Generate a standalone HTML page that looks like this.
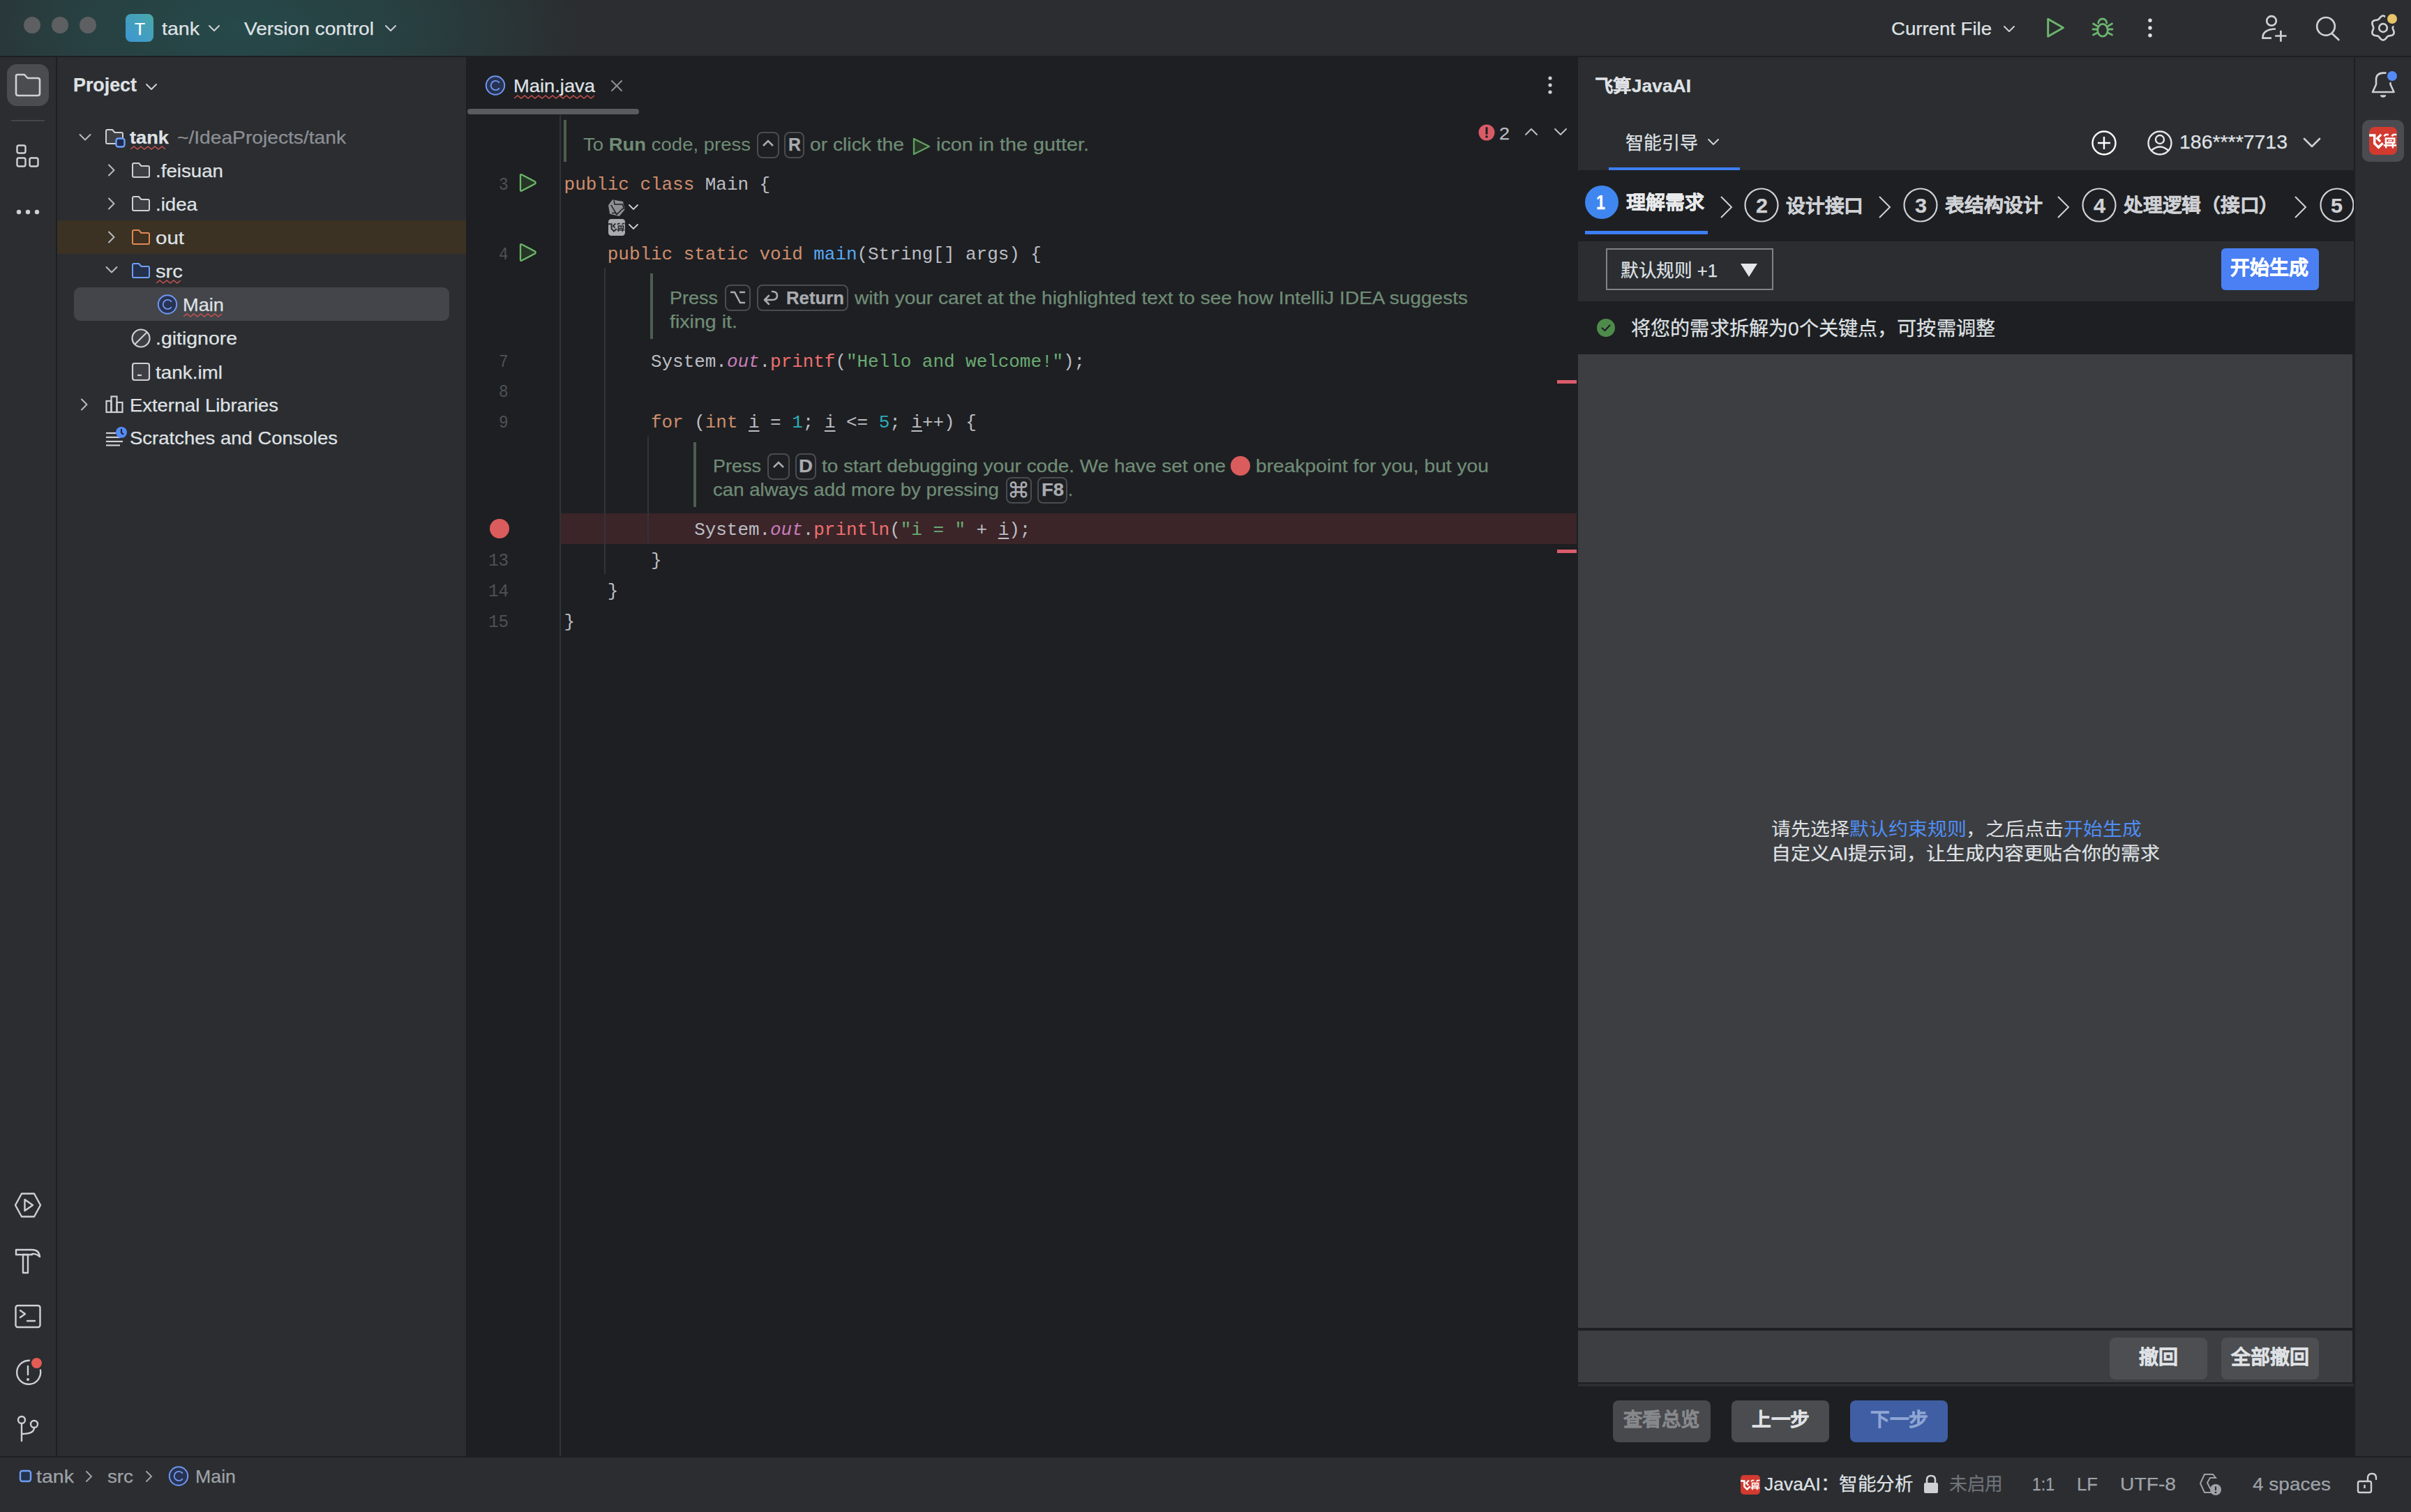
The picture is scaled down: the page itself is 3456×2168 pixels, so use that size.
<!DOCTYPE html><html lang="zh-CN"><head><meta charset="utf-8"><title>IntelliJ IDEA</title><style>
html,body{margin:0;padding:0;width:3456px;height:2168px;overflow:hidden;background:#2b2d30;}
body{position:relative;font-family:'Liberation Sans',sans-serif;}
</style></head><body>
<div style="position:absolute;left:0px;top:0px;width:3456px;height:80px;background:radial-gradient(ellipse 500px 220px at 340px 40px, #26494a 0%, #283f40 50%, #2b2d30 100%);border-radius:0px;"></div>
<div style="position:absolute;left:0px;top:80px;width:3456px;height:2px;background:#1e1f22;border-radius:0px;"></div>
<div style="position:absolute;left:0px;top:82px;width:80px;height:2006px;background:#2b2d30;border-radius:0px;"></div>
<div style="position:absolute;left:80px;top:82px;width:2px;height:2006px;background:#1e1f22;border-radius:0px;"></div>
<div style="position:absolute;left:82px;top:82px;width:586px;height:2006px;background:#2b2d30;border-radius:0px;"></div>
<div style="position:absolute;left:668px;top:82px;width:1594px;height:2006px;background:#1e1f22;border-radius:0px;"></div>
<div style="position:absolute;left:2262px;top:82px;width:1112px;height:2006px;background:#1e1f22;border-radius:0px;"></div>
<div style="position:absolute;left:3374px;top:82px;width:2px;height:2006px;background:#1e1f22;border-radius:0px;"></div>
<div style="position:absolute;left:3376px;top:82px;width:80px;height:2006px;background:#2b2d30;border-radius:0px;"></div>
<div style="position:absolute;left:0px;top:2088px;width:3456px;height:2px;background:#1e1f22;border-radius:0px;"></div>
<div style="position:absolute;left:0px;top:2090px;width:3456px;height:78px;background:#2b2d30;border-radius:0px;"></div>
<div style="position:absolute;left:34px;top:24px;width:24px;height:24px;border-radius:50%;background:#5d5f61"></div>
<div style="position:absolute;left:74px;top:24px;width:24px;height:24px;border-radius:50%;background:#5d5f61"></div>
<div style="position:absolute;left:114px;top:24px;width:24px;height:24px;border-radius:50%;background:#5d5f61"></div>
<div style="position:absolute;left:180px;top:20px;width:40px;height:40px;background:linear-gradient(45deg, #3d96d4 0%, #4aa8a8 100%);border-radius:8px;"></div>
<div id="t1" style="position:absolute;left:192.50px;top:29.60px;font-family:'Liberation Sans', sans-serif;font-size:24px;line-height:1;white-space:pre;color:#ffffff;font-weight:400;transform-origin:0 0;-webkit-text-stroke:0.25px #ffffff;transform:scaleX(1.0224);">T</div>
<div id="t2" style="position:absolute;left:232px;top:27.90px;font-family:'Liberation Sans', sans-serif;font-size:26px;line-height:1;white-space:pre;color:#dfe1e5;font-weight:400;transform-origin:0 0;-webkit-text-stroke:0.25px #dfe1e5;transform:scaleX(1.0985);">tank</div>
<svg style="position:absolute;left:298px;top:35px" width="18" height="12" viewBox="0 0 18 12" fill="none"><path d="M2 2 L9 9 L16 2" stroke="#ced0d6" stroke-width="2" stroke-linecap="round" stroke-linejoin="round"/></svg>
<div id="t3" style="position:absolute;left:350px;top:27.90px;font-family:'Liberation Sans', sans-serif;font-size:26px;line-height:1;white-space:pre;color:#dfe1e5;font-weight:400;transform-origin:0 0;-webkit-text-stroke:0.25px #dfe1e5;transform:scaleX(1.0815);">Version control</div>
<svg style="position:absolute;left:551px;top:35px" width="18" height="12" viewBox="0 0 18 12" fill="none"><path d="M2 2 L9 9 L16 2" stroke="#ced0d6" stroke-width="2" stroke-linecap="round" stroke-linejoin="round"/></svg>
<div id="t4" style="position:absolute;left:2711px;top:27.90px;font-family:'Liberation Sans', sans-serif;font-size:26px;line-height:1;white-space:pre;color:#dfe1e5;font-weight:400;transform-origin:0 0;-webkit-text-stroke:0.25px #dfe1e5;transform:scaleX(1.0602);">Current File</div>
<svg style="position:absolute;left:2871px;top:36px" width="18" height="12" viewBox="0 0 18 12" fill="none"><path d="M2 2 L9 9 L16 2" stroke="#ced0d6" stroke-width="2" stroke-linecap="round" stroke-linejoin="round"/></svg>
<svg style="position:absolute;left:2928px;top:20px" width="36" height="40" viewBox="0 0 36 40" fill="none"><path d="M7.7 7.3 L29.5 19.8 L7.7 32.3 Z" stroke="#6db470" stroke-width="3" stroke-linejoin="round" fill="none"/></svg>
<svg style="position:absolute;left:2996px;top:20px" width="36" height="38" viewBox="0 0 36 38" fill="none"><g stroke="#6db470" stroke-width="2.8" stroke-linecap="round" fill="none">
<path d="M11.8 13 A6 6 0 0 1 23.8 13"/>
<ellipse cx="18" cy="23.3" rx="7.3" ry="8.9"/>
<path d="M4.5 14 L10.5 17.5 M4 22 H10 M4.5 30 L10.5 27 M31.5 14 L25.5 17.5 M32 22 H26 M31.5 30 L25.5 27"/>
</g></svg>
<svg style="position:absolute;left:3072px;top:20px" width="20" height="40" viewBox="0 0 20 40" fill="none"><circle cx="10" cy="9.2" r="2.7" fill="#dfe1e5"/><circle cx="10" cy="20" r="2.7" fill="#dfe1e5"/><circle cx="10" cy="30.8" r="2.7" fill="#dfe1e5"/></svg>
<svg style="position:absolute;left:3232px;top:14px" width="50" height="50" viewBox="0 0 50 50" fill="none"><g stroke="#ced0d6" stroke-width="2.7" stroke-linecap="butt" fill="none"><circle cx="24" cy="15.9" r="6.8"/><path d="M24 40.7 H11.5 Q11 28 30 27.5"/><path d="M37.4 29.8 V45.7 M29.2 37.5 H45.6"/></g></svg>
<svg style="position:absolute;left:3312px;top:14px" width="48" height="50" viewBox="0 0 48 50" fill="none"><g stroke="#ced0d6" stroke-width="2.7" stroke-linecap="round" fill="none"><circle cx="22" cy="23.8" r="12.8"/><path d="M31 34.3 L40.3 43"/></g></svg>
<svg style="position:absolute;left:3392px;top:16px" width="48" height="48" viewBox="0 0 48 48" fill="none"><g stroke="#ced0d6" stroke-width="2.7" fill="none" stroke-linejoin="round"><path d="M37.80,24.00 L37.87,24.73 L38.07,25.48 L38.36,26.27 L38.72,27.13 L39.07,28.04 L39.37,28.99 L39.55,29.97 L39.58,30.94 L39.43,31.86 L39.07,32.70 L38.52,33.43 L37.80,34.03 L36.95,34.48 L36.01,34.81 L35.03,35.03 L34.07,35.18 L33.15,35.30 L32.31,35.44 L31.56,35.65 L30.90,35.95 L30.31,36.37 L29.75,36.92 L29.21,37.58 L28.65,38.31 L28.04,39.07 L27.36,39.80 L26.61,40.45 L25.78,40.96 L24.91,41.29 L24.00,41.40 L23.09,41.29 L22.22,40.96 L21.39,40.45 L20.64,39.80 L19.96,39.07 L19.35,38.31 L18.79,37.58 L18.25,36.92 L17.69,36.37 L17.10,35.95 L16.44,35.65 L15.69,35.44 L14.85,35.30 L13.93,35.18 L12.97,35.03 L11.99,34.81 L11.05,34.48 L10.20,34.03 L9.48,33.43 L8.93,32.70 L8.57,31.86 L8.42,30.94 L8.45,29.97 L8.63,28.99 L8.93,28.04 L9.28,27.13 L9.64,26.27 L9.93,25.48 L10.13,24.73 L10.20,24.00 L10.13,23.27 L9.93,22.52 L9.64,21.73 L9.28,20.87 L8.93,19.96 L8.63,19.01 L8.45,18.03 L8.42,17.06 L8.57,16.14 L8.93,15.30 L9.48,14.57 L10.20,13.97 L11.05,13.52 L11.99,13.19 L12.97,12.97 L13.93,12.82 L14.85,12.70 L15.69,12.56 L16.44,12.35 L17.10,12.05 L17.69,11.63 L18.25,11.08 L18.79,10.42 L19.35,9.69 L19.96,8.93 L20.64,8.20 L21.39,7.55 L22.22,7.04 L23.09,6.71 L24.00,6.60 L24.91,6.71 L25.78,7.04 L26.61,7.55 L27.36,8.20 L28.04,8.93 L28.65,9.69 L29.21,10.42 L29.75,11.08 L30.31,11.63 L30.90,12.05 L31.56,12.35 L32.31,12.56 L33.15,12.70 L34.07,12.82 L35.03,12.97 L36.01,13.19 L36.95,13.52 L37.80,13.97 L38.52,14.57 L39.07,15.30 L39.43,16.14 L39.58,17.06 L39.55,18.03 L39.37,19.01 L39.07,19.96 L38.72,20.87 L38.36,21.73 L38.07,22.52 L37.87,23.27 L37.80,24.00 Z"/><circle cx="24" cy="24" r="5.8"/></g></svg>
<div style="position:absolute;left:3421.9px;top:20.2px;width:14px;height:14px;border-radius:50%;background:#e8c36a;box-shadow:0 0 0 3.5px #2b2d30"></div>
<div style="position:absolute;left:10px;top:92px;width:60px;height:60px;background:#4a4c50;border-radius:14px;"></div>
<svg style="position:absolute;left:20px;top:104px" width="40" height="36" viewBox="0 0 40 36" fill="none"><path d="M3 5 Q3 3 5 3 H15 L19.5 8 H34 Q37 8 37 11 V30 Q37 33 34 33 H6 Q3 33 3 30 Z" stroke="#ced0d6" stroke-width="2.6" stroke-linejoin="round"/></svg>
<div style="position:absolute;left:16px;top:172px;width:48px;height:2px;background:#43454a;border-radius:0px;"></div>
<svg style="position:absolute;left:22px;top:206px" width="36" height="36" viewBox="0 0 36 36" fill="none"><g stroke="#ced0d6" stroke-width="2.4" fill="none"><rect x="2.5" y="2.5" width="12" height="11" rx="2.5"/><rect x="2.5" y="20.5" width="12" height="12" rx="2.5"/><rect x="20.5" y="20.5" width="12" height="12" rx="2.5"/></g></svg>
<svg style="position:absolute;left:20px;top:296px" width="40" height="16" viewBox="0 0 40 16" fill="none"><circle cx="7" cy="8" r="3.2" fill="#ced0d6"/><circle cx="20" cy="8" r="3.2" fill="#ced0d6"/><circle cx="33" cy="8" r="3.2" fill="#ced0d6"/></svg>
<svg style="position:absolute;left:20px;top:1708px" width="40" height="40" viewBox="0 0 40 40" fill="none"><g stroke="#ced0d6" stroke-width="2.4" fill="none" stroke-linejoin="round"><path d="M11 3.5 H29 L38 20 L29 36.5 H11 L2 20 Z"/><path d="M15.5 12 L27 20 L15.5 28 Z"/></g></svg>
<svg style="position:absolute;left:20px;top:1788px" width="40" height="40" viewBox="0 0 40 40" fill="none"><g stroke="#ced0d6" stroke-width="2.4" fill="none" stroke-linejoin="round"><path d="M3 4 H26 Q36 4 37 14 Q32 9 26 10 V11 H3 Z"/><path d="M13 11 H20 V37 H13 Z"/></g></svg>
<svg style="position:absolute;left:20px;top:1868px" width="40" height="40" viewBox="0 0 40 40" fill="none"><g stroke="#ced0d6" stroke-width="2.4" fill="none" stroke-linejoin="round" stroke-linecap="round"><rect x="2.5" y="4" width="35" height="31" rx="3"/><path d="M9 11 L16 16 L9 21"/><path d="M19 26 H30"/></g></svg>
<svg style="position:absolute;left:20px;top:1948px" width="42" height="42" viewBox="0 0 42 42" fill="none"><g stroke="#ced0d6" stroke-width="2.4" fill="none" stroke-linecap="round"><path d="M26 3.5 A17 17 0 1 0 37.5 15"/><path d="M20 11 V23"/></g><circle cx="20" cy="30" r="2" fill="#ced0d6"/></svg>
<div style="position:absolute;left:45px;top:1947px;width:15px;height:15px;border-radius:50%;background:#e55b55;box-shadow:0 0 0 3px #2b2d30"></div>
<svg style="position:absolute;left:20px;top:2028px" width="40" height="42" viewBox="0 0 40 42" fill="none"><g stroke="#ced0d6" stroke-width="2.4" fill="none" stroke-linecap="round"><circle cx="11" cy="8" r="5"/><circle cx="29" cy="14" r="5"/><path d="M11 13 V38"/><path d="M29 19 Q29 28 12 28"/></g></svg>
<div id="t5" style="position:absolute;left:105px;top:109.05px;font-family:'Liberation Sans', sans-serif;font-size:27px;line-height:1;white-space:pre;color:#dfe1e5;font-weight:700;transform-origin:0 0;-webkit-text-stroke:0.25px #dfe1e5;transform:scaleX(0.9940);">Project</div>
<svg style="position:absolute;left:208px;top:119px" width="18" height="12" viewBox="0 0 18 12" fill="none"><path d="M2 2 L9 9 L16 2" stroke="#ced0d6" stroke-width="2" stroke-linecap="round" stroke-linejoin="round"/></svg>
<div style="position:absolute;left:82px;top:316px;width:586px;height:48px;background:#3b3224;border-radius:0px;"></div>
<div style="position:absolute;left:106px;top:412px;width:538px;height:48px;background:#43454a;border-radius:9px;"></div>
<svg style="position:absolute;left:112px;top:190px" width="20" height="14" viewBox="0 0 20 14" fill="none"><path d="M2.5 3 L10 10.5 L17.5 3" stroke="#b8bbc1" stroke-width="2" stroke-linecap="round" stroke-linejoin="round"/></svg>
<svg style="position:absolute;left:150px;top:184px" width="28" height="24" viewBox="0 0 28 24" fill="none"><path d="M2 4 Q2 2 4 2 H11 L14.5 6 H24 Q26 6 26 8 V20 Q26 22 24 22 H4 Q2 22 2 20 Z" fill="#3d3f44" stroke="#ced0d6" stroke-width="2" stroke-linejoin="round" transform="scale(1.0,1.0)"/></svg>
<svg style="position:absolute;left:164px;top:196px" width="18" height="18" viewBox="0 0 18 18" fill="none"><rect x="2.5" y="2.5" width="12" height="12" rx="3" fill="#1d2a4d" stroke="#6f9ef8" stroke-width="2.4"/></svg>
<div id="t6" style="position:absolute;left:186px;top:183.90px;font-family:'Liberation Sans', sans-serif;font-size:26px;line-height:1;white-space:pre;color:#dfe1e5;font-weight:700;transform-origin:0 0;-webkit-text-stroke:0.25px #dfe1e5;transform:scaleX(1.0473);">tank</div>
<div id="t7" style="position:absolute;left:254px;top:183.90px;font-family:'Liberation Sans', sans-serif;font-size:26px;line-height:1;white-space:pre;color:#8c8f95;font-weight:400;transform-origin:0 0;-webkit-text-stroke:0.25px #8c8f95;transform:scaleX(1.0837);">~/IdeaProjects/tank</div>
<svg style="position:absolute;left:187px;top:209px" width="56" height="6" viewBox="0 0 56 6" fill="none"><polyline points="0.0,4 5.0,0 10.0,4 15.0,0 20.0,4 25.0,0 30.0,4 35.0,0 40.0,4 45.0,0 50.0,4" stroke="#c4524f" stroke-width="1.6" fill="none" transform="translate(0,1)"/></svg>
<svg style="position:absolute;left:153px;top:234px" width="14" height="20" viewBox="0 0 14 20" fill="none"><path d="M3 2.5 L10.5 10 L3 17.5" stroke="#b8bbc1" stroke-width="2" stroke-linecap="round" stroke-linejoin="round"/></svg>
<svg style="position:absolute;left:188px;top:232px" width="28" height="24" viewBox="0 0 28 24" fill="none"><path d="M2 4 Q2 2 4 2 H11 L14.5 6 H24 Q26 6 26 8 V20 Q26 22 24 22 H4 Q2 22 2 20 Z" fill="#3d3f44" stroke="#ced0d6" stroke-width="2" stroke-linejoin="round" transform="scale(1.0,1.0)"/></svg>
<div id="t8" style="position:absolute;left:223px;top:231.90px;font-family:'Liberation Sans', sans-serif;font-size:26px;line-height:1;white-space:pre;color:#dfe1e5;font-weight:400;transform-origin:0 0;-webkit-text-stroke:0.25px #dfe1e5;transform:scaleX(1.0650);">.feisuan</div>
<svg style="position:absolute;left:153px;top:282px" width="14" height="20" viewBox="0 0 14 20" fill="none"><path d="M3 2.5 L10.5 10 L3 17.5" stroke="#b8bbc1" stroke-width="2" stroke-linecap="round" stroke-linejoin="round"/></svg>
<svg style="position:absolute;left:188px;top:280px" width="28" height="24" viewBox="0 0 28 24" fill="none"><path d="M2 4 Q2 2 4 2 H11 L14.5 6 H24 Q26 6 26 8 V20 Q26 22 24 22 H4 Q2 22 2 20 Z" fill="#3d3f44" stroke="#ced0d6" stroke-width="2" stroke-linejoin="round" transform="scale(1.0,1.0)"/></svg>
<div id="t9" style="position:absolute;left:223px;top:279.90px;font-family:'Liberation Sans', sans-serif;font-size:26px;line-height:1;white-space:pre;color:#dfe1e5;font-weight:400;transform-origin:0 0;-webkit-text-stroke:0.25px #dfe1e5;transform:scaleX(1.0640);">.idea</div>
<svg style="position:absolute;left:153px;top:330px" width="14" height="20" viewBox="0 0 14 20" fill="none"><path d="M3 2.5 L10.5 10 L3 17.5" stroke="#b8bbc1" stroke-width="2" stroke-linecap="round" stroke-linejoin="round"/></svg>
<svg style="position:absolute;left:188px;top:328px" width="28" height="24" viewBox="0 0 28 24" fill="none"><path d="M2 4 Q2 2 4 2 H11 L14.5 6 H24 Q26 6 26 8 V20 Q26 22 24 22 H4 Q2 22 2 20 Z" fill="#3f3020" stroke="#e08855" stroke-width="2" stroke-linejoin="round" transform="scale(1.0,1.0)"/></svg>
<div id="t10" style="position:absolute;left:223px;top:327.90px;font-family:'Liberation Sans', sans-serif;font-size:26px;line-height:1;white-space:pre;color:#dfe1e5;font-weight:400;transform-origin:0 0;-webkit-text-stroke:0.25px #dfe1e5;transform:scaleX(1.1340);">out</div>
<svg style="position:absolute;left:150px;top:380px" width="20" height="14" viewBox="0 0 20 14" fill="none"><path d="M2.5 3 L10 10.5 L17.5 3" stroke="#b8bbc1" stroke-width="2" stroke-linecap="round" stroke-linejoin="round"/></svg>
<svg style="position:absolute;left:188px;top:376px" width="28" height="24" viewBox="0 0 28 24" fill="none"><path d="M2 4 Q2 2 4 2 H11 L14.5 6 H24 Q26 6 26 8 V20 Q26 22 24 22 H4 Q2 22 2 20 Z" fill="#25324d" stroke="#6f9ef8" stroke-width="2" stroke-linejoin="round" transform="scale(1.0,1.0)"/></svg>
<div id="t11" style="position:absolute;left:223px;top:375.90px;font-family:'Liberation Sans', sans-serif;font-size:26px;line-height:1;white-space:pre;color:#dfe1e5;font-weight:400;transform-origin:0 0;-webkit-text-stroke:0.25px #dfe1e5;transform:scaleX(1.1248);">src</div>
<svg style="position:absolute;left:224px;top:401px" width="39" height="6" viewBox="0 0 39 6" fill="none"><polyline points="0.0,4 5.0,0 10.0,4 15.0,0 20.0,4 25.0,0 30.0,4 35.0,0" stroke="#c4524f" stroke-width="1.6" fill="none" transform="translate(0,1)"/></svg>
<svg style="position:absolute;left:224px;top:421px" width="32" height="32" viewBox="0 0 32 32" fill="none"><circle cx="16" cy="15.5" r="13.2" stroke="#6f97f0" stroke-width="2" fill="#283252"/><path d="M21.3 11.2 A6.6 6.6 0 1 0 21.3 19.8" stroke="#6f97f0" stroke-width="1.9" fill="none" stroke-linecap="round"/></svg>
<div id="t12" style="position:absolute;left:262px;top:423.90px;font-family:'Liberation Sans', sans-serif;font-size:26px;line-height:1;white-space:pre;color:#dfe1e5;font-weight:400;transform-origin:0 0;-webkit-text-stroke:0.25px #dfe1e5;transform:scaleX(1.0469);">Main</div>
<svg style="position:absolute;left:263px;top:449px" width="59" height="6" viewBox="0 0 59 6" fill="none"><polyline points="0.0,4 5.0,0 10.0,4 15.0,0 20.0,4 25.0,0 30.0,4 35.0,0 40.0,4 45.0,0 50.0,4 55.0,0" stroke="#c4524f" stroke-width="1.6" fill="none" transform="translate(0,1)"/></svg>
<svg style="position:absolute;left:186px;top:469px" width="32" height="32" viewBox="0 0 32 32" fill="none"><circle cx="16" cy="16" r="12.5" stroke="#ced0d6" stroke-width="2.2" fill="#3d3f44"/><path d="M7.5 24.5 L24.5 7.5" stroke="#ced0d6" stroke-width="2.2"/></svg>
<div id="t13" style="position:absolute;left:223px;top:471.90px;font-family:'Liberation Sans', sans-serif;font-size:26px;line-height:1;white-space:pre;color:#dfe1e5;font-weight:400;transform-origin:0 0;-webkit-text-stroke:0.25px #dfe1e5;transform:scaleX(1.0938);">.gitignore</div>
<svg style="position:absolute;left:187px;top:518px" width="30" height="30" viewBox="0 0 30 30" fill="none"><rect x="3" y="3" width="24" height="24" rx="3" stroke="#ced0d6" stroke-width="2.2" fill="#3d3f44"/><path d="M10 20 H16" stroke="#ced0d6" stroke-width="2.2"/></svg>
<div id="t14" style="position:absolute;left:223px;top:520.90px;font-family:'Liberation Sans', sans-serif;font-size:26px;line-height:1;white-space:pre;color:#dfe1e5;font-weight:400;transform-origin:0 0;-webkit-text-stroke:0.25px #dfe1e5;transform:scaleX(1.0717);">tank.iml</div>
<svg style="position:absolute;left:114px;top:570px" width="14" height="20" viewBox="0 0 14 20" fill="none"><path d="M3 2.5 L10.5 10 L3 17.5" stroke="#b8bbc1" stroke-width="2" stroke-linecap="round" stroke-linejoin="round"/></svg>
<svg style="position:absolute;left:150px;top:566px" width="32" height="28" viewBox="0 0 32 28" fill="none"><g stroke="#ced0d6" stroke-width="2.2" fill="none"><rect x="2.5" y="9" width="7" height="16"/><rect x="9.5" y="2.5" width="8" height="22.5"/><rect x="17.5" y="11" width="8" height="14"/></g></svg>
<div id="t15" style="position:absolute;left:186px;top:567.90px;font-family:'Liberation Sans', sans-serif;font-size:26px;line-height:1;white-space:pre;color:#dfe1e5;font-weight:400;transform-origin:0 0;-webkit-text-stroke:0.25px #dfe1e5;transform:scaleX(1.0528);">External Libraries</div>
<svg style="position:absolute;left:150px;top:610px" width="34" height="30" viewBox="0 0 34 30" fill="none"><g stroke="#ced0d6" stroke-width="2.2"><path d="M2 11 H16"/><path d="M2 17 H22"/><path d="M2 23 H26"/><path d="M2 28.5 H22"/></g><circle cx="24" cy="10" r="8" fill="#548af7"/><path d="M24 5 V10.5 L27 13" stroke="#1e1f22" stroke-width="2" fill="none"/></svg>
<div id="t16" style="position:absolute;left:186px;top:614.90px;font-family:'Liberation Sans', sans-serif;font-size:26px;line-height:1;white-space:pre;color:#dfe1e5;font-weight:400;transform-origin:0 0;-webkit-text-stroke:0.25px #dfe1e5;transform:scaleX(1.0574);">Scratches and Consoles</div>
<svg style="position:absolute;left:694px;top:107px" width="32" height="32" viewBox="0 0 32 32" fill="none"><circle cx="16" cy="15.5" r="13.2" stroke="#6f97f0" stroke-width="2" fill="#283252"/><path d="M21.3 11.2 A6.6 6.6 0 1 0 21.3 19.8" stroke="#6f97f0" stroke-width="1.9" fill="none" stroke-linecap="round"/></svg>
<div id="t17" style="position:absolute;left:736px;top:109.90px;font-family:'Liberation Sans', sans-serif;font-size:26px;line-height:1;white-space:pre;color:#dfe1e5;font-weight:400;transform-origin:0 0;-webkit-text-stroke:0.25px #dfe1e5;transform:scaleX(1.0514);">Main.java</div>
<svg style="position:absolute;left:737px;top:136px" width="117" height="6" viewBox="0 0 117 6" fill="none"><polyline points="0.0,4 5.0,0 10.0,4 15.0,0 20.0,4 25.0,0 30.0,4 35.0,0 40.0,4 45.0,0 50.0,4 55.0,0 60.0,4 65.0,0 70.0,4 75.0,0 80.0,4 85.0,0 90.0,4 95.0,0 100.0,4 105.0,0 110.0,4 115.0,0" stroke="#c4524f" stroke-width="1.6" fill="none" transform="translate(0,1)"/></svg>
<svg style="position:absolute;left:874px;top:113px" width="20" height="20" viewBox="0 0 20 20" fill="none"><path d="M3 3 L17 17 M17 3 L3 17" stroke="#8c8f95" stroke-width="2" stroke-linecap="round"/></svg>
<div style="position:absolute;left:670px;top:156px;width:246px;height:8px;background:#595b5f;border-radius:4px;"></div>
<svg style="position:absolute;left:2212px;top:108px" width="20" height="28" viewBox="0 0 20 28" fill="none"><circle cx="10" cy="4" r="2.6" fill="#ced0d6"/><circle cx="10" cy="14" r="2.6" fill="#ced0d6"/><circle cx="10" cy="24" r="2.6" fill="#ced0d6"/></svg>
<div style="position:absolute;left:802px;top:165px;width:2px;height:1923px;background:#313438;border-radius:0px;"></div>
<div style="position:absolute;left:804px;top:736px;width:1456px;height:44px;background:#3b2529;border-radius:0px;"></div>
<div style="position:absolute;left:866px;top:384px;width:2px;height:439px;background:#313438;border-radius:0px;"></div>
<div style="position:absolute;left:928px;top:626px;width:2px;height:154px;background:#313438;border-radius:0px;"></div>
<div style="position:absolute;left:2232px;top:545px;width:28px;height:5px;background:#db5c6c;border-radius:0px;"></div>
<div style="position:absolute;left:2232px;top:788px;width:28px;height:5px;background:#db5c6c;border-radius:0px;"></div>
<svg style="position:absolute;left:2118px;top:177px" width="26" height="26" viewBox="0 0 26 26" fill="none"><circle cx="13" cy="13" r="11.5" fill="#d95b66"/><path d="M13 6.5 V14.5" stroke="#1e1f22" stroke-width="3" stroke-linecap="round"/><circle cx="13" cy="19" r="1.8" fill="#1e1f22"/></svg>
<div id="t18" style="position:absolute;left:2149px;top:179.60px;font-family:'Liberation Sans', sans-serif;font-size:24px;line-height:1;white-space:pre;color:#bcbec4;font-weight:400;transform-origin:0 0;-webkit-text-stroke:0.25px #bcbec4;transform:scaleX(1.1228);">2</div>
<svg style="position:absolute;left:2184px;top:182px" width="22" height="14" viewBox="0 0 22 14" fill="none"><path d="M3 11 L11 3 L19 11" stroke="#bcbec4" stroke-width="2" stroke-linecap="round" stroke-linejoin="round"/></svg>
<svg style="position:absolute;left:2226px;top:182px" width="22" height="14" viewBox="0 0 22 14" fill="none"><path d="M3 3 L11 11 L19 3" stroke="#bcbec4" stroke-width="2" stroke-linecap="round" stroke-linejoin="round"/></svg>
<div id="t19" style="position:absolute;left:715.40px;top:252.24px;font-family:'Liberation Mono', monospace;font-size:26px;line-height:1;white-space:pre;color:#4e5157;font-weight:400;transform-origin:0 0;transform:scaleX(0.8713);">3</div>
<div id="t20" style="position:absolute;left:715.40px;top:352.24px;font-family:'Liberation Mono', monospace;font-size:26px;line-height:1;white-space:pre;color:#4e5157;font-weight:400;transform-origin:0 0;transform:scaleX(0.8713);">4</div>
<div id="t21" style="position:absolute;left:715.40px;top:506.24px;font-family:'Liberation Mono', monospace;font-size:26px;line-height:1;white-space:pre;color:#4e5157;font-weight:400;transform-origin:0 0;transform:scaleX(0.8713);">7</div>
<div id="t22" style="position:absolute;left:715.40px;top:549.24px;font-family:'Liberation Mono', monospace;font-size:26px;line-height:1;white-space:pre;color:#4e5157;font-weight:400;transform-origin:0 0;transform:scaleX(0.8713);">8</div>
<div id="t23" style="position:absolute;left:715.40px;top:593.24px;font-family:'Liberation Mono', monospace;font-size:26px;line-height:1;white-space:pre;color:#4e5157;font-weight:400;transform-origin:0 0;transform:scaleX(0.8713);">9</div>
<div id="t24" style="position:absolute;left:699.80px;top:791.24px;font-family:'Liberation Mono', monospace;font-size:26px;line-height:1;white-space:pre;color:#4e5157;font-weight:400;transform-origin:0 0;transform:scaleX(0.9353);">13</div>
<div id="t25" style="position:absolute;left:699.80px;top:835.24px;font-family:'Liberation Mono', monospace;font-size:26px;line-height:1;white-space:pre;color:#4e5157;font-weight:400;transform-origin:0 0;transform:scaleX(0.9353);">14</div>
<div id="t26" style="position:absolute;left:699.80px;top:879.24px;font-family:'Liberation Mono', monospace;font-size:26px;line-height:1;white-space:pre;color:#4e5157;font-weight:400;transform-origin:0 0;transform:scaleX(0.9353);">15</div>
<svg style="position:absolute;left:742px;top:248px" width="28" height="28" viewBox="0 0 28 28" fill="none"><path d="M4 3.5 Q4 1.5 6 2.5 L25 12.5 Q26.5 14 25 15.5 L6 25.5 Q4 26.5 4 24.5 Z" fill="#263526" stroke="#6cb66a" stroke-width="2.3" stroke-linejoin="round"/></svg>
<svg style="position:absolute;left:742px;top:348px" width="28" height="28" viewBox="0 0 28 28" fill="none"><path d="M4 3.5 Q4 1.5 6 2.5 L25 12.5 Q26.5 14 25 15.5 L6 25.5 Q4 26.5 4 24.5 Z" fill="#263526" stroke="#6cb66a" stroke-width="2.3" stroke-linejoin="round"/></svg>
<div style="position:absolute;left:702px;top:744px;width:28px;height:28px;border-radius:50%;background:#db5c5c"></div>
<div id="t27" style="position:absolute;left:808.6px;top:252.24px;font-family:'Liberation Mono', monospace;font-size:26px;line-height:1;white-space:pre;color:#bcbec4;font-weight:400;transform-origin:0 0;letter-spacing:-0.05px;"><span style="color:#cf8e6d;">public class </span><span style="color:#bcbec4;">Main {</span></div>
<div id="t28" style="position:absolute;left:870.8000000000001px;top:352.24px;font-family:'Liberation Mono', monospace;font-size:26px;line-height:1;white-space:pre;color:#bcbec4;font-weight:400;transform-origin:0 0;letter-spacing:-0.05px;"><span style="color:#cf8e6d;">public static void </span><span style="color:#56a8f5;">main</span><span style="color:#bcbec4;">(String[] args) {</span></div>
<div id="t29" style="position:absolute;left:933.0px;top:506.24px;font-family:'Liberation Mono', monospace;font-size:26px;line-height:1;white-space:pre;color:#bcbec4;font-weight:400;transform-origin:0 0;letter-spacing:-0.05px;"><span style="color:#bcbec4;">System.</span><span style="color:#c77dbb;font-style:italic;">out</span><span style="color:#bcbec4;">.</span><span style="color:#ef6f6f;">printf</span><span style="color:#bcbec4;">(</span><span style="color:#6aab73;">&quot;Hello and welcome!&quot;</span><span style="color:#bcbec4;">);</span></div>
<div id="t30" style="position:absolute;left:933.0px;top:593.24px;font-family:'Liberation Mono', monospace;font-size:26px;line-height:1;white-space:pre;color:#bcbec4;font-weight:400;transform-origin:0 0;letter-spacing:-0.05px;"><span style="color:#cf8e6d;">for </span><span style="color:#bcbec4;">(</span><span style="color:#cf8e6d;">int </span><span style="color:#bcbec4;text-decoration:underline;text-underline-offset:4px;text-decoration-thickness:1.5px;">i</span><span style="color:#bcbec4;"> = </span><span style="color:#2aacb8;">1</span><span style="color:#bcbec4;">; </span><span style="color:#bcbec4;text-decoration:underline;text-underline-offset:4px;text-decoration-thickness:1.5px;">i</span><span style="color:#bcbec4;"> &lt;= </span><span style="color:#2aacb8;">5</span><span style="color:#bcbec4;">; </span><span style="color:#bcbec4;text-decoration:underline;text-underline-offset:4px;text-decoration-thickness:1.5px;">i</span><span style="color:#bcbec4;">++) {</span></div>
<div id="t31" style="position:absolute;left:995.2px;top:747.24px;font-family:'Liberation Mono', monospace;font-size:26px;line-height:1;white-space:pre;color:#bcbec4;font-weight:400;transform-origin:0 0;letter-spacing:-0.05px;"><span style="color:#bcbec4;">System.</span><span style="color:#c77dbb;font-style:italic;">out</span><span style="color:#bcbec4;">.</span><span style="color:#ef6f6f;">println</span><span style="color:#bcbec4;">(</span><span style="color:#6aab73;">&quot;i = &quot;</span><span style="color:#bcbec4;"> + </span><span style="color:#bcbec4;text-decoration:underline;text-underline-offset:4px;text-decoration-thickness:1.5px;">i</span><span style="color:#bcbec4;">);</span></div>
<div id="t32" style="position:absolute;left:933.0px;top:791.24px;font-family:'Liberation Mono', monospace;font-size:26px;line-height:1;white-space:pre;color:#bcbec4;font-weight:400;transform-origin:0 0;letter-spacing:-0.05px;"><span style="color:#bcbec4;">}</span></div>
<div id="t33" style="position:absolute;left:870.8000000000001px;top:835.24px;font-family:'Liberation Mono', monospace;font-size:26px;line-height:1;white-space:pre;color:#bcbec4;font-weight:400;transform-origin:0 0;letter-spacing:-0.05px;"><span style="color:#bcbec4;">}</span></div>
<div id="t34" style="position:absolute;left:808.6px;top:879.24px;font-family:'Liberation Mono', monospace;font-size:26px;line-height:1;white-space:pre;color:#bcbec4;font-weight:400;transform-origin:0 0;letter-spacing:-0.05px;"><span style="color:#bcbec4;">}</span></div>
<svg style="position:absolute;left:872px;top:286px" width="24" height="24" viewBox="0 0 24 24" fill="none"><polygon points="6,0.3 21,3 23.6,14.6 15.8,24 2.1,20.7 0,8.2" fill="#8e9094"/><g stroke="#1e1f22" stroke-width="1.5" fill="none"><path d="M8.1 1.3 L9 6.9 H20.6 L22.3 14.2"/><path d="M3.8 7.8 L12 21.5 L21 12.9"/><path d="M5.1 19.4 H10.7"/></g></svg>
<svg style="position:absolute;left:900px;top:292px" width="16" height="12" viewBox="0 0 16 12" fill="none"><path d="M2 2 L8 8 L14 2" stroke="#ced0d6" stroke-width="1.8" fill="none" stroke-linecap="round"/></svg>
<svg style="position:absolute;left:872px;top:314px" width="24" height="24" viewBox="0 0 40 40" fill="none"><rect x="0" y="0" width="40" height="40" rx="7" fill="#a9abaf"/><g stroke="#2b2d30" fill="none" stroke-linejoin="miter" stroke-linecap="butt"><path d="M0 12 H7.7 V23.6 L13.4 29.3 L19.6 23.2" stroke-width="3.5"/><path d="M17.2 10.8 L11.6 16.5 L16.1 21" stroke-width="3.3"/><path d="M21.3 13.2 L23.8 11 H27.8 M32.3 13.2 L34.8 11 H39.3" stroke-width="2.6"/><rect x="23.9" y="16.6" width="12.3" height="6" stroke-width="2.6"/><path d="M27 19.6 H33" stroke-width="1.6"/><path d="M20.8 26.4 H39" stroke-width="2.6"/><path d="M24.2 23.4 V30.6 M33.9 23.4 V30.6" stroke-width="2.3"/></g></svg>
<svg style="position:absolute;left:900px;top:320px" width="16" height="12" viewBox="0 0 16 12" fill="none"><path d="M2 2 L8 8 L14 2" stroke="#ced0d6" stroke-width="1.8" fill="none" stroke-linecap="round"/></svg>
<div style="position:absolute;left:808px;top:172px;width:4px;height:60px;background:#4b5e4f;border-radius:0px;"></div>
<div style="position:absolute;left:932px;top:392px;width:4px;height:94px;background:#4b5e4f;border-radius:0px;"></div>
<div style="position:absolute;left:994px;top:634px;width:4px;height:93px;background:#4b5e4f;border-radius:0px;"></div>
<div id="t35" style="position:absolute;left:836px;top:193.90px;font-family:'Liberation Sans', sans-serif;font-size:26px;line-height:1;white-space:pre;color:#6f8c77;font-weight:400;transform-origin:0 0;transform:scaleX(1.0579);">To <b>Run</b> code, press</div>
<div style="position:absolute;left:1085px;top:189px;width:32px;height:38px;box-sizing:border-box;border:2px solid #4a4c51;border-radius:8px;"></div>
<svg style="position:absolute;left:1089px;top:196px" width="24" height="20" viewBox="0 0 24 20" fill="none"><path d="M5 13 L12 6 L19 13" stroke="#a9abb0" stroke-width="2.6" fill="none" stroke-linejoin="miter"/></svg>
<div style="position:absolute;left:1124px;top:189px;width:29px;height:38px;box-sizing:border-box;border:2px solid #4a4c51;border-radius:8px;"></div>
<div id="t36" style="position:absolute;left:1130px;top:193.90px;font-family:'Liberation Sans', sans-serif;font-size:26px;line-height:1;white-space:pre;color:#a9abb0;font-weight:700;transform-origin:0 0;-webkit-text-stroke:0.25px #a9abb0;transform:scaleX(0.9584);">R</div>
<div id="t37" style="position:absolute;left:1161px;top:193.90px;font-family:'Liberation Sans', sans-serif;font-size:26px;line-height:1;white-space:pre;color:#6f8c77;font-weight:400;transform-origin:0 0;-webkit-text-stroke:0.25px #6f8c77;transform:scaleX(1.0864);">or click the</div>
<svg style="position:absolute;left:1306px;top:196px" width="30" height="28" viewBox="0 0 30 28" fill="none"><path d="M4 3 L26 14 L4 25 Z" stroke="#62a062" stroke-width="2.3" fill="#263526" stroke-linejoin="round"/></svg>
<div id="t38" style="position:absolute;left:1342px;top:193.90px;font-family:'Liberation Sans', sans-serif;font-size:26px;line-height:1;white-space:pre;color:#6f8c77;font-weight:400;transform-origin:0 0;-webkit-text-stroke:0.25px #6f8c77;transform:scaleX(1.1059);">icon in the gutter.</div>
<div id="t39" style="position:absolute;left:960px;top:413.90px;font-family:'Liberation Sans', sans-serif;font-size:26px;line-height:1;white-space:pre;color:#6f8c77;font-weight:400;transform-origin:0 0;-webkit-text-stroke:0.25px #6f8c77;transform:scaleX(1.0381);">Press</div>
<div style="position:absolute;left:1039px;top:408px;width:37px;height:38px;box-sizing:border-box;border:2px solid #4a4c51;border-radius:8px;"></div>
<svg style="position:absolute;left:1045px;top:414px" width="26" height="26" viewBox="0 0 26 26" fill="none"><path d="M2 5 H8 L16 20 H23 M15 5 H23" stroke="#a9abb0" stroke-width="2.6" fill="none"/></svg>
<div style="position:absolute;left:1085px;top:408px;width:131px;height:38px;box-sizing:border-box;border:2px solid #4a4c51;border-radius:8px;"></div>
<svg style="position:absolute;left:1090px;top:414px" width="30" height="26" viewBox="0 0 30 26" fill="none"><path d="M6 16 H17 Q24 16 24 10 Q24 4 17 4 M6 16 L12 10 M6 16 L12 22" stroke="#a9abb0" stroke-width="2.6" fill="none" stroke-linecap="round" stroke-linejoin="round"/></svg>
<div id="t40" style="position:absolute;left:1127px;top:413.90px;font-family:'Liberation Sans', sans-serif;font-size:26px;line-height:1;white-space:pre;color:#a9abb0;font-weight:700;transform-origin:0 0;-webkit-text-stroke:0.25px #a9abb0;transform:scaleX(0.9907);">Return</div>
<div id="t41" style="position:absolute;left:1225px;top:413.90px;font-family:'Liberation Sans', sans-serif;font-size:26px;line-height:1;white-space:pre;color:#6f8c77;font-weight:400;transform-origin:0 0;-webkit-text-stroke:0.25px #6f8c77;transform:scaleX(1.0784);">with your caret at the highlighted text to see how IntelliJ IDEA suggests</div>
<div id="t42" style="position:absolute;left:960px;top:447.90px;font-family:'Liberation Sans', sans-serif;font-size:26px;line-height:1;white-space:pre;color:#6f8c77;font-weight:400;transform-origin:0 0;-webkit-text-stroke:0.25px #6f8c77;transform:scaleX(1.1003);">fixing it.</div>
<div id="t43" style="position:absolute;left:1022px;top:654.90px;font-family:'Liberation Sans', sans-serif;font-size:26px;line-height:1;white-space:pre;color:#6f8c77;font-weight:400;transform-origin:0 0;-webkit-text-stroke:0.25px #6f8c77;transform:scaleX(1.0381);">Press</div>
<div style="position:absolute;left:1100px;top:650px;width:32px;height:38px;box-sizing:border-box;border:2px solid #4a4c51;border-radius:8px;"></div>
<svg style="position:absolute;left:1104px;top:657px" width="24" height="20" viewBox="0 0 24 20" fill="none"><path d="M5 13 L12 6 L19 13" stroke="#a9abb0" stroke-width="2.6" fill="none"/></svg>
<div style="position:absolute;left:1140px;top:650px;width:30px;height:38px;box-sizing:border-box;border:2px solid #4a4c51;border-radius:8px;"></div>
<div id="t44" style="position:absolute;left:1145px;top:654.90px;font-family:'Liberation Sans', sans-serif;font-size:26px;line-height:1;white-space:pre;color:#a9abb0;font-weight:700;transform-origin:0 0;-webkit-text-stroke:0.25px #a9abb0;transform:scaleX(1.0649);">D</div>
<div id="t45" style="position:absolute;left:1178px;top:654.90px;font-family:'Liberation Sans', sans-serif;font-size:26px;line-height:1;white-space:pre;color:#6f8c77;font-weight:400;transform-origin:0 0;-webkit-text-stroke:0.25px #6f8c77;transform:scaleX(1.0749);">to start debugging your code. We have set one</div>
<div style="position:absolute;left:1764px;top:654px;width:28px;height:28px;border-radius:50%;background:#db5c5c"></div>
<div id="t46" style="position:absolute;left:1800px;top:654.90px;font-family:'Liberation Sans', sans-serif;font-size:26px;line-height:1;white-space:pre;color:#6f8c77;font-weight:400;transform-origin:0 0;-webkit-text-stroke:0.25px #6f8c77;transform:scaleX(1.0849);">breakpoint for you, but you</div>
<div id="t47" style="position:absolute;left:1022px;top:688.90px;font-family:'Liberation Sans', sans-serif;font-size:26px;line-height:1;white-space:pre;color:#6f8c77;font-weight:400;transform-origin:0 0;-webkit-text-stroke:0.25px #6f8c77;transform:scaleX(1.0625);">can always add more by pressing</div>
<div style="position:absolute;left:1442px;top:684px;width:37px;height:38px;box-sizing:border-box;border:2px solid #4a4c51;border-radius:8px;"></div>
<div id="t48" style="position:absolute;left:1447px;top:690.60px;font-family:'Liberation Sans', sans-serif;font-size:24px;line-height:1;white-space:pre;color:#a9abb0;font-weight:700;transform-origin:0 0;-webkit-text-stroke:0.25px #a9abb0;transform:scaleX(1.0833);">⌘</div>
<div style="position:absolute;left:1487px;top:684px;width:43px;height:38px;box-sizing:border-box;border:2px solid #4a4c51;border-radius:8px;"></div>
<div id="t49" style="position:absolute;left:1493px;top:688.90px;font-family:'Liberation Sans', sans-serif;font-size:26px;line-height:1;white-space:pre;color:#a9abb0;font-weight:700;transform-origin:0 0;-webkit-text-stroke:0.25px #a9abb0;transform:scaleX(1.0546);">F8</div>
<div id="t50" style="position:absolute;left:1531px;top:688.90px;font-family:'Liberation Sans', sans-serif;font-size:26px;line-height:1;white-space:pre;color:#6f8c77;font-weight:400;transform-origin:0 0;-webkit-text-stroke:0.25px #6f8c77;transform:scaleX(0.9676);">.</div>
<div style="position:absolute;left:2262px;top:82px;width:1112px;height:162px;background:#2b2d30;border-radius:0px;"></div>
<div style="position:absolute;left:2262px;top:346px;width:1112px;height:86px;background:#2b2d30;border-radius:0px;"></div>
<div style="position:absolute;left:2262px;top:508px;width:1110px;height:1396px;background:#3d3e41;border-radius:0px;"></div>
<div style="position:absolute;left:2262px;top:1908px;width:1110px;height:74px;background:#3d3e41;border-radius:0px;"></div>
<div style="position:absolute;left:2262px;top:1984px;width:1112px;height:4px;background:#2b2d30;border-radius:0px;"></div>
<div id="t51" style="position:absolute;left:2286px;top:110.75px;font-family:'Liberation Sans', sans-serif;font-size:25px;line-height:1;white-space:pre;color:#dfe1e5;font-weight:700;transform-origin:0 0;-webkit-text-stroke:0.25px #dfe1e5;transform:scaleX(1.0565);">飞算JavaAI</div>
<div id="t52" style="position:absolute;left:2330px;top:191.90px;font-family:'Liberation Sans', sans-serif;font-size:26px;line-height:1;white-space:pre;color:#dfe1e5;font-weight:400;transform-origin:0 0;-webkit-text-stroke:0.25px #dfe1e5;transform:scaleX(1.0000);">智能引导</div>
<svg style="position:absolute;left:2446px;top:197px" width="20" height="14" viewBox="0 0 20 14" fill="none"><path d="M3 3 L10 10 L17 3" stroke="#ced0d6" stroke-width="2" fill="none" stroke-linecap="round" stroke-linejoin="round"/></svg>
<div style="position:absolute;left:2306px;top:240px;width:188px;height:4px;background:#3d7ef5;border-radius:0px;"></div>
<svg style="position:absolute;left:2996px;top:185px" width="40" height="40" viewBox="0 0 40 40" fill="none"><circle cx="20" cy="20" r="16.5" stroke="#ffffff" stroke-width="2.4"/><path d="M20 11 V29 M11 20 H29" stroke="#ffffff" stroke-width="2.4"/></svg>
<svg style="position:absolute;left:3076px;top:185px" width="40" height="40" viewBox="0 0 40 40" fill="none"><circle cx="20" cy="20" r="16.5" stroke="#e6e7ea" stroke-width="2.4"/><circle cx="20" cy="15" r="6" stroke="#e6e7ea" stroke-width="2.4"/><path d="M7.5 31 Q20 20 32.5 31" stroke="#e6e7ea" stroke-width="2.4" fill="none"/></svg>
<div id="t53" style="position:absolute;left:3124px;top:191.05px;font-family:'Liberation Sans', sans-serif;font-size:27px;line-height:1;white-space:pre;color:#dfe1e5;font-weight:400;transform-origin:0 0;-webkit-text-stroke:0.25px #dfe1e5;transform:scaleX(1.0533);">186****7713</div>
<svg style="position:absolute;left:3300px;top:196px" width="28" height="18" viewBox="0 0 28 18" fill="none"><path d="M3 3 L14 14 L25 3" stroke="#ced0d6" stroke-width="2.6" fill="none" stroke-linecap="round" stroke-linejoin="round"/></svg>
<div style="position:absolute;left:2272px;top:266px;width:48px;height:48px;border-radius:50%;background:#3f86f1"></div>
<div id="t54" style="position:absolute;left:2288.00px;top:274.50px;font-family:'Liberation Sans', sans-serif;font-size:30px;line-height:1;white-space:pre;color:#ffffff;font-weight:700;transform-origin:0 0;-webkit-text-stroke:0.25px #ffffff;transform:scaleX(0.7790);">1</div>
<div id="t55" style="position:absolute;left:2331px;top:278.05px;font-family:'Liberation Sans', sans-serif;font-size:27px;line-height:1;white-space:pre;color:#e9eaec;font-weight:700;transform-origin:0 0;-webkit-text-stroke:0.4px #e9eaec;transform:scaleX(1.0370);">理解需求</div>
<div style="position:absolute;left:2272px;top:331px;width:176px;height:5px;background:#3d7ef5;border-radius:0px;"></div>
<svg style="position:absolute;left:2464px;top:279px" width="22" height="36" viewBox="0 0 22 36" fill="none"><path d="M3 3 L18 18 L3 33" stroke="#cfd1d5" stroke-width="2" fill="none"/></svg>
<svg style="position:absolute;left:2498.5px;top:268px" width="52" height="52" viewBox="0 0 52 52" fill="none"><circle cx="26" cy="26" r="23.5" stroke="#cfd1d5" stroke-width="2.2"/></svg>
<div id="t56" style="position:absolute;left:2516.50px;top:279.50px;font-family:'Liberation Sans', sans-serif;font-size:30px;line-height:1;white-space:pre;color:#cfd1d5;font-weight:700;transform-origin:0 0;-webkit-text-stroke:0.25px #cfd1d5;transform:scaleX(1.0187);">2</div>
<div id="t57" style="position:absolute;left:2560px;top:282.55px;font-family:'Liberation Sans', sans-serif;font-size:27px;line-height:1;white-space:pre;color:#cfd1d5;font-weight:700;transform-origin:0 0;-webkit-text-stroke:0.4px #cfd1d5;transform:scaleX(1.0278);">设计接口</div>
<svg style="position:absolute;left:2691px;top:279px" width="22" height="36" viewBox="0 0 22 36" fill="none"><path d="M3 3 L18 18 L3 33" stroke="#cfd1d5" stroke-width="2" fill="none"/></svg>
<svg style="position:absolute;left:2726.5px;top:268px" width="52" height="52" viewBox="0 0 52 52" fill="none"><circle cx="26" cy="26" r="23.5" stroke="#cfd1d5" stroke-width="2.2"/></svg>
<div id="t58" style="position:absolute;left:2744.50px;top:279.50px;font-family:'Liberation Sans', sans-serif;font-size:30px;line-height:1;white-space:pre;color:#cfd1d5;font-weight:700;transform-origin:0 0;-webkit-text-stroke:0.25px #cfd1d5;transform:scaleX(1.0187);">3</div>
<div id="t59" style="position:absolute;left:2788px;top:282.05px;font-family:'Liberation Sans', sans-serif;font-size:27px;line-height:1;white-space:pre;color:#cfd1d5;font-weight:700;transform-origin:0 0;-webkit-text-stroke:0.4px #cfd1d5;transform:scaleX(1.0370);">表结构设计</div>
<svg style="position:absolute;left:2947px;top:279px" width="22" height="36" viewBox="0 0 22 36" fill="none"><path d="M3 3 L18 18 L3 33" stroke="#cfd1d5" stroke-width="2" fill="none"/></svg>
<svg style="position:absolute;left:2982.5px;top:268px" width="52" height="52" viewBox="0 0 52 52" fill="none"><circle cx="26" cy="26" r="23.5" stroke="#cfd1d5" stroke-width="2.2"/></svg>
<div id="t60" style="position:absolute;left:3000.50px;top:279.50px;font-family:'Liberation Sans', sans-serif;font-size:30px;line-height:1;white-space:pre;color:#cfd1d5;font-weight:700;transform-origin:0 0;-webkit-text-stroke:0.25px #cfd1d5;transform:scaleX(1.0187);">4</div>
<div id="t61" style="position:absolute;left:3044px;top:282.05px;font-family:'Liberation Sans', sans-serif;font-size:27px;line-height:1;white-space:pre;color:#cfd1d5;font-weight:700;transform-origin:0 0;-webkit-text-stroke:0.4px #cfd1d5;transform:scaleX(1.0278);">处理逻辑（接口）</div>
<svg style="position:absolute;left:3287px;top:279px" width="22" height="36" viewBox="0 0 22 36" fill="none"><path d="M3 3 L18 18 L3 33" stroke="#cfd1d5" stroke-width="2" fill="none"/></svg>
<div style="position:absolute;left:3262px;top:244px;width:112px;height:102px;overflow:hidden"><svg style="position:absolute;left:62px;top:24px" width="52" height="52" viewBox="0 0 52 52" fill="none"><circle cx="26" cy="26" r="23.5" stroke="#cfd1d5" stroke-width="2.2"/></svg></div>
<div id="t62" style="position:absolute;left:3341.00px;top:279.50px;font-family:'Liberation Sans', sans-serif;font-size:30px;line-height:1;white-space:pre;color:#cfd1d5;font-weight:700;transform-origin:0 0;-webkit-text-stroke:0.25px #cfd1d5;transform:scaleX(1.0187);">5</div>
<div style="position:absolute;left:2302px;top:356px;width:240px;height:60px;box-sizing:border-box;border:2px solid #808287;"></div>
<div id="t63" style="position:absolute;left:2323px;top:374.90px;font-family:'Liberation Sans', sans-serif;font-size:26px;line-height:1;white-space:pre;color:#dfe1e5;font-weight:400;transform-origin:0 0;-webkit-text-stroke:0.25px #dfe1e5;transform:scaleX(0.9867);">默认规则 +1</div>
<svg style="position:absolute;left:2492px;top:374px" width="30" height="26" viewBox="0 0 30 26" fill="none"><path d="M3 4 H27 L15 23 Z" fill="#e6e7ea"/></svg>
<div style="position:absolute;left:3184px;top:356px;width:140px;height:60px;background:#4a80f4;border-radius:6px;"></div>
<div id="t64" style="position:absolute;left:3197px;top:370.70px;font-family:'Liberation Sans', sans-serif;font-size:28px;line-height:1;white-space:pre;color:#ffffff;font-weight:700;transform-origin:0 0;-webkit-text-stroke:0.4px #ffffff;transform:scaleX(1.0000);">开始生成</div>
<svg style="position:absolute;left:2289px;top:457px" width="26" height="26" viewBox="0 0 26 26" fill="none"><circle cx="13" cy="13" r="13" fill="#4e8b4b"/><path d="M7.5 13.5 L11.5 17 L18.5 9.5" stroke="#1e1f22" stroke-width="2.2" fill="none" stroke-linecap="round"/></svg>
<div id="t65" style="position:absolute;left:2338px;top:458.20px;font-family:'Liberation Sans', sans-serif;font-size:28px;line-height:1;white-space:pre;color:#dfe1e5;font-weight:400;transform-origin:0 0;-webkit-text-stroke:0.25px #dfe1e5;transform:scaleX(1.0047);">将您的需求拆解为0个关键点，可按需调整</div>
<div id="t66" style="position:absolute;left:2539px;top:1175.90px;font-family:'Liberation Sans', sans-serif;font-size:26px;line-height:1;white-space:pre;color:#dfe1e5;font-weight:400;transform-origin:0 0;transform:scaleX(1.0749);">请先选择<span style="color:#4e8ef7">默认约束规则</span>，之后点击<span style="color:#4e8ef7">开始生成</span></div>
<div id="t67" style="position:absolute;left:2539px;top:1210.90px;font-family:'Liberation Sans', sans-serif;font-size:26px;line-height:1;white-space:pre;color:#dfe1e5;font-weight:400;transform-origin:0 0;-webkit-text-stroke:0.25px #dfe1e5;transform:scaleX(1.0741);">自定义AI提示词，让生成内容更贴合你的需求</div>
<div style="position:absolute;left:3024px;top:1918px;width:140px;height:60px;background:#4d4e51;border-radius:8px;"></div>
<div id="t68" style="position:absolute;left:3066.00px;top:1932.70px;font-family:'Liberation Sans', sans-serif;font-size:28px;line-height:1;white-space:pre;color:#dfe1e5;font-weight:700;transform-origin:0 0;-webkit-text-stroke:0.4px #dfe1e5;transform:scaleX(1.0000);">撤回</div>
<div style="position:absolute;left:3184px;top:1918px;width:140px;height:60px;background:#4d4e51;border-radius:8px;"></div>
<div id="t69" style="position:absolute;left:3198.00px;top:1932.70px;font-family:'Liberation Sans', sans-serif;font-size:28px;line-height:1;white-space:pre;color:#dfe1e5;font-weight:700;transform-origin:0 0;-webkit-text-stroke:0.4px #dfe1e5;transform:scaleX(1.0000);">全部撤回</div>
<div style="position:absolute;left:2312px;top:2008px;width:140px;height:60px;background:#48494d;border-radius:8px;"></div>
<div id="t70" style="position:absolute;left:2327.00px;top:2022.55px;font-family:'Liberation Sans', sans-serif;font-size:27px;line-height:1;white-space:pre;color:#86888c;font-weight:700;transform-origin:0 0;-webkit-text-stroke:0.4px #86888c;transform:scaleX(1.0185);">查看总览</div>
<div style="position:absolute;left:2482px;top:2008px;width:140px;height:60px;background:#4a4c50;border-radius:8px;"></div>
<div id="t71" style="position:absolute;left:2510.50px;top:2022.55px;font-family:'Liberation Sans', sans-serif;font-size:27px;line-height:1;white-space:pre;color:#dfe1e5;font-weight:700;transform-origin:0 0;-webkit-text-stroke:0.4px #dfe1e5;transform:scaleX(1.0247);">上一步</div>
<div style="position:absolute;left:2652px;top:2008px;width:140px;height:60px;background:#3f5ea3;border-radius:8px;"></div>
<div id="t72" style="position:absolute;left:2680.50px;top:2022.55px;font-family:'Liberation Sans', sans-serif;font-size:27px;line-height:1;white-space:pre;color:#8fa5d4;font-weight:700;transform-origin:0 0;-webkit-text-stroke:0.4px #8fa5d4;transform:scaleX(1.0247);">下一步</div>
<svg style="position:absolute;left:3392px;top:96px" width="48" height="48" viewBox="0 0 48 48" fill="none"><g stroke="#ced0d6" stroke-width="2.6" fill="none" stroke-linejoin="round" stroke-linecap="round"><path d="M27.5 8.6 H24 Q14 9 14 18 V25 L9 36 H39.5 L34.5 25 V23"/></g><path d="M19.8 40.2 A4.3 4.2 0 0 0 28.3 40.2 Z" fill="#ced0d6"/></svg>
<div style="position:absolute;left:3421.8px;top:101.6px;width:14.4px;height:14.4px;border-radius:50%;background:#548af7"></div>
<div style="position:absolute;left:3386px;top:172px;width:60px;height:60px;background:#4a4c52;border-radius:10px;"></div>
<svg style="position:absolute;left:3396px;top:182px" width="40" height="40" viewBox="0 0 40 40" fill="none"><rect x="0" y="0" width="40" height="40" rx="8" fill="#d23a2f"/><g stroke="#ffffff" fill="none" stroke-linejoin="miter" stroke-linecap="butt"><path d="M0 12 H7.7 V23.6 L13.4 29.3 L19.6 23.2" stroke-width="3.5"/><path d="M17.2 10.8 L11.6 16.5 L16.1 21" stroke-width="3.3"/><path d="M21.3 13.2 L23.8 11 H27.8 M32.3 13.2 L34.8 11 H39.3" stroke-width="2.6"/><rect x="23.9" y="16.6" width="12.3" height="6" stroke-width="2.6"/><path d="M27 19.6 H33" stroke-width="1.6"/><path d="M20.8 26.4 H39" stroke-width="2.6"/><path d="M24.2 23.4 V30.6 M33.9 23.4 V30.6" stroke-width="2.3"/></g></svg>
<svg style="position:absolute;left:26px;top:2106px" width="22" height="22" viewBox="0 0 22 22" fill="none"><rect x="3" y="3" width="15" height="15" rx="3" stroke="#6f9ef8" stroke-width="2.4" fill="#25324d"/></svg>
<div id="t73" style="position:absolute;left:52px;top:2103.90px;font-family:'Liberation Sans', sans-serif;font-size:26px;line-height:1;white-space:pre;color:#9fa2a8;font-weight:400;transform-origin:0 0;-webkit-text-stroke:0.25px #9fa2a8;transform:scaleX(1.0985);">tank</div>
<svg style="position:absolute;left:120px;top:2107px" width="16" height="20" viewBox="0 0 16 20" fill="none"><path d="M4 3 L11 10 L4 17" stroke="#9fa2a8" stroke-width="2" fill="none" stroke-linecap="round"/></svg>
<div id="t74" style="position:absolute;left:154px;top:2103.90px;font-family:'Liberation Sans', sans-serif;font-size:26px;line-height:1;white-space:pre;color:#9fa2a8;font-weight:400;transform-origin:0 0;-webkit-text-stroke:0.25px #9fa2a8;transform:scaleX(1.0671);">src</div>
<svg style="position:absolute;left:206px;top:2107px" width="16" height="20" viewBox="0 0 16 20" fill="none"><path d="M4 3 L11 10 L4 17" stroke="#9fa2a8" stroke-width="2" fill="none" stroke-linecap="round"/></svg>
<svg style="position:absolute;left:240px;top:2101px" width="32" height="32" viewBox="0 0 32 32" fill="none"><circle cx="16" cy="15.5" r="13.2" stroke="#6f97f0" stroke-width="2" fill="#283252"/><path d="M21.3 11.2 A6.6 6.6 0 1 0 21.3 19.8" stroke="#6f97f0" stroke-width="1.9" fill="none" stroke-linecap="round"/></svg>
<div id="t75" style="position:absolute;left:280px;top:2103.90px;font-family:'Liberation Sans', sans-serif;font-size:26px;line-height:1;white-space:pre;color:#9fa2a8;font-weight:400;transform-origin:0 0;-webkit-text-stroke:0.25px #9fa2a8;transform:scaleX(1.0291);">Main</div>
<svg style="position:absolute;left:2495px;top:2115px" width="28" height="28" viewBox="0 0 40 40" fill="none"><rect x="0" y="0" width="40" height="40" rx="7" fill="#d23a2f"/><g stroke="#ffffff" fill="none" stroke-linejoin="miter" stroke-linecap="butt"><path d="M0 12 H7.7 V23.6 L13.4 29.3 L19.6 23.2" stroke-width="3.5"/><path d="M17.2 10.8 L11.6 16.5 L16.1 21" stroke-width="3.3"/><path d="M21.3 13.2 L23.8 11 H27.8 M32.3 13.2 L34.8 11 H39.3" stroke-width="2.6"/><rect x="23.9" y="16.6" width="12.3" height="6" stroke-width="2.6"/><path d="M27 19.6 H33" stroke-width="1.6"/><path d="M20.8 26.4 H39" stroke-width="2.6"/><path d="M24.2 23.4 V30.6 M33.9 23.4 V30.6" stroke-width="2.3"/></g></svg>
<div id="t76" style="position:absolute;left:2529px;top:2114.90px;font-family:'Liberation Sans', sans-serif;font-size:26px;line-height:1;white-space:pre;color:#dfe1e5;font-weight:400;transform-origin:0 0;-webkit-text-stroke:0.25px #dfe1e5;transform:scaleX(1.0167);">JavaAI：智能分析</div>
<svg style="position:absolute;left:2754px;top:2112px" width="28" height="32" viewBox="0 0 28 32" fill="none"><path d="M8 14 V10 Q8 4 14 4 Q20 4 20 10 V14" stroke="#ced0d6" stroke-width="2.6" fill="none"/><rect x="4" y="14" width="20" height="15" rx="2" fill="#ced0d6"/></svg>
<div id="t77" style="position:absolute;left:2794px;top:2114.90px;font-family:'Liberation Sans', sans-serif;font-size:26px;line-height:1;white-space:pre;color:#6f737a;font-weight:400;transform-origin:0 0;-webkit-text-stroke:0.25px #6f737a;transform:scaleX(0.9872);">未启用</div>
<div id="t78" style="position:absolute;left:2913px;top:2114.90px;font-family:'Liberation Sans', sans-serif;font-size:26px;line-height:1;white-space:pre;color:#9fa2a8;font-weight:400;transform-origin:0 0;-webkit-text-stroke:0.25px #9fa2a8;transform:scaleX(0.8850);">1:1</div>
<div id="t79" style="position:absolute;left:2977px;top:2114.90px;font-family:'Liberation Sans', sans-serif;font-size:26px;line-height:1;white-space:pre;color:#9fa2a8;font-weight:400;transform-origin:0 0;-webkit-text-stroke:0.25px #9fa2a8;transform:scaleX(0.9887);">LF</div>
<div id="t80" style="position:absolute;left:3039px;top:2114.90px;font-family:'Liberation Sans', sans-serif;font-size:26px;line-height:1;white-space:pre;color:#9fa2a8;font-weight:400;transform-origin:0 0;-webkit-text-stroke:0.25px #9fa2a8;transform:scaleX(1.0859);">UTF-8</div>
<svg style="position:absolute;left:3150px;top:2110px" width="36" height="36" viewBox="0 0 36 36" fill="none"><path d="M10 4 L22 4 L26 9 L18 9 L14 16 L18 24 L26 24 L22 30 L10 30 L4 17 Z" fill="none" stroke="#9fa2a8" stroke-width="2"/><circle cx="26" cy="26" r="8" fill="#9fa2a8"/><path d="M26 21.5 V27" stroke="#2b2d30" stroke-width="2.2"/><circle cx="26" cy="30" r="1.3" fill="#2b2d30"/></svg>
<div id="t81" style="position:absolute;left:3229px;top:2114.90px;font-family:'Liberation Sans', sans-serif;font-size:26px;line-height:1;white-space:pre;color:#9fa2a8;font-weight:400;transform-origin:0 0;-webkit-text-stroke:0.25px #9fa2a8;transform:scaleX(1.0761);">4 spaces</div>
<svg style="position:absolute;left:3376px;top:2108px" width="34" height="36" viewBox="0 0 34 36" fill="none"><path d="M18 16 V11 Q18 5 24 5 Q30 5 30 11 V13" stroke="#ced0d6" stroke-width="2.4" fill="none" stroke-linecap="round"/><rect x="4" y="16" width="19" height="16" rx="2.5" stroke="#ced0d6" stroke-width="2.4" fill="none"/><path d="M13.5 21 V26" stroke="#ced0d6" stroke-width="2.4"/></svg></body></html>
